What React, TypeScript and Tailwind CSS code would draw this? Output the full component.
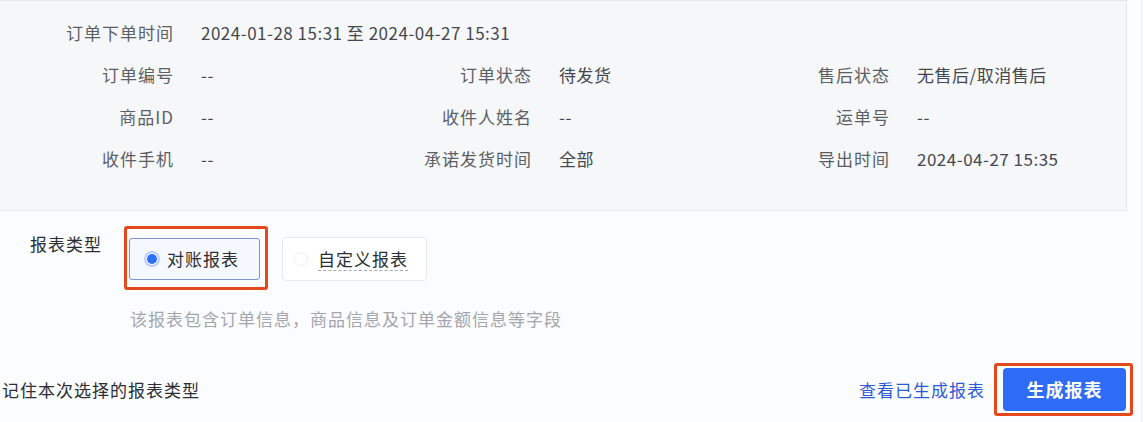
import React from 'react';

interface Field {
  label: string;
  value: string;
}

const rows: Field[][] = [
  [{ label: '订单下单时间', value: '2024-01-28 15:31 至 2024-04-27 15:31' }],
  [
    { label: '订单编号', value: '--' },
    { label: '订单状态', value: '待发货' },
    { label: '售后状态', value: '无售后/取消售后' }
  ],
  [
    { label: '商品ID', value: '--' },
    { label: '收件人姓名', value: '--' },
    { label: '运单号', value: '--' }
  ],
  [
    { label: '收件手机', value: '--' },
    { label: '承诺发货时间', value: '全部' },
    { label: '导出时间', value: '2024-04-27 15:35' }
  ]
];

function FilterSummary() {
  return (
    <div className="h-[211px] w-[1127px] border-y border-r border-[#e6e8ec] bg-[#f6f7f9] pl-[24px] pt-[11px]">
      {rows.map((row, i) => (
        <div key={i} className="grid h-[42px] grid-cols-[358px_358px_1fr] items-center">
          {row.map((f) => (
            <div key={f.label} className="flex items-center whitespace-nowrap">
              <span className="w-[150px] shrink-0 text-right tracking-[1px] text-[#5c5f66]">{f.label}</span>
              <span className="ml-[27px] shrink-0 tracking-[0.5px] text-[#45484f]">{f.value}</span>
            </div>
          ))}
        </div>
      ))}
    </div>
  );
}

function ReportType() {
  return (
    <div className="flex items-start pl-[30px] pt-[21px]">
      <span className="w-[99px] leading-[24px] tracking-[1px] text-[#2b2e33]">报表类型</span>
      <div className="mt-[5px] flex items-center gap-[22px]">
        <div className="relative">
          <label className="flex h-[42px] w-[131px] items-center gap-[7px] rounded-[3px] border border-[#7f95cf] bg-[#f5f8ff] pl-[14px]">
            <span className="flex h-[16px] w-[16px] items-center justify-center rounded-full border-2 border-[#b9cdf8] bg-white">
              <span className="h-[10px] w-[10px] rounded-full bg-[#2a6ff4]" />
            </span>
            <span className="tracking-[1px] text-[#2b2e33]">对账报表</span>
          </label>
          <div className="pointer-events-none absolute -bottom-[10px] -left-[5px] -right-[8px] -top-[12px] rounded-[3px] border-[3px] border-[#e4491d]" />
        </div>
        <label className="flex h-[44px] w-[145px] items-center gap-[10px] rounded-[4px] border border-[#e6e8ec] bg-white pl-[11px]">
          <span className="h-[14px] w-[14px] rounded-full border border-[#ebedf0] bg-white" />
          <span className="border-b border-dashed border-[#a5aab3] leading-[22px] tracking-[1px] text-[#2b2e33]">
            自定义报表
          </span>
        </label>
      </div>
    </div>
  );
}

export default function App() {
  return (
    <div
      className="h-[422px] w-[1144px] overflow-hidden bg-[#fbfcfe] text-[17px]"
      style={{ fontFamily: '"Noto Sans CJK SC", "Noto Sans", sans-serif' }}
    >
      <div className="h-full w-[1142px] border-r border-[#eceef2]">
        <FilterSummary />
        <ReportType />
        <p className="mt-[26px] pl-[130px] leading-[24px] tracking-[1px] text-[#a3a6ad]">
          该报表包含订单信息，商品信息及订单金额信息等字段
        </p>
        <div className="mt-[37px] flex h-[43px] w-[1126px] items-center justify-between pl-[2px]">
          <span className="tracking-[1px] text-[#2b2e33]">记住本次选择的报表类型</span>
          <div className="flex items-center gap-[18px]">
            <a className="tracking-[1px] text-[#2d5bd6]">查看已生成报表</a>
            <div className="relative">
              <button className="h-[43px] w-[123px] rounded-[4px] bg-[#2f6cf5] text-[18px] font-bold tracking-[1px] text-white">
                生成报表
              </button>
              <div className="pointer-events-none absolute -bottom-[5px] -left-[9px] -right-[7px] -top-[5px] rounded-[3px] border-[3px] border-[#e4491d]" />
            </div>
          </div>
        </div>
      </div>
    </div>
  );
}
